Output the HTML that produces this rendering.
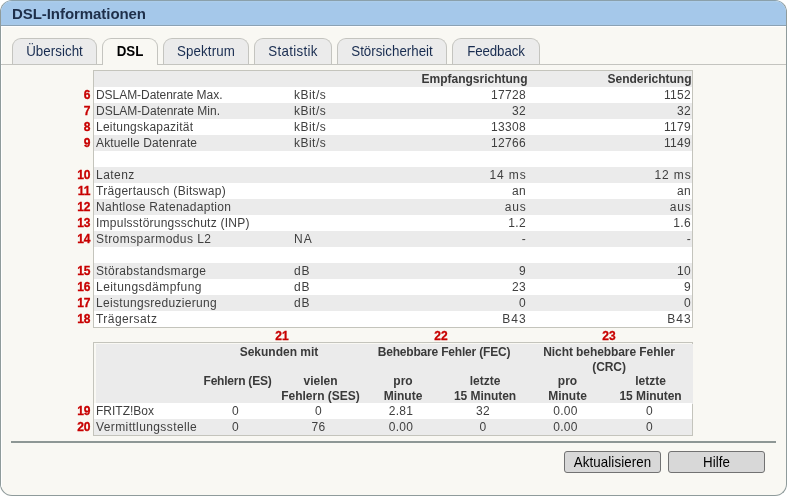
<!DOCTYPE html>
<html lang="de">
<head>
<meta charset="utf-8">
<title>DSL-Informationen</title>
<style>
html,body{margin:0;padding:0;background:#fff;}
body{width:787px;height:496px;overflow:hidden;font-family:"Liberation Sans",sans-serif;font-size:12px;color:#3f3f3f;position:relative;}
#win{will-change:transform;position:absolute;left:0;top:0;width:785px;height:494px;border:1px solid #8f9b9b;border-top-color:#8aa0ab;border-radius:12px;background:#f9f8f3;overflow:hidden;}
#head{position:absolute;left:0;top:0;width:785px;height:24px;background:linear-gradient(#adcdea 0,#a5c8ea 2px,#a5c8ea 22px,#a9cae8 24px);border-bottom:1px solid #8ba2b4;}
#head span{position:absolute;left:11px;top:4px;font-size:15px;font-weight:bold;color:#1e2f4a;line-height:18px;letter-spacing:-0.06px;}
#hl{position:absolute;left:0;top:25px;width:785px;height:1px;background:#fff;}
#vl{position:absolute;left:0;top:26px;width:1px;height:460px;background:#fff;}
#tabline{position:absolute;left:0;top:63px;width:785px;height:1px;background:#c4c4bf;}
.tab{position:absolute;top:37px;height:26px;box-sizing:border-box;border:1px solid #c4c4bf;border-bottom:none;border-radius:9px 9px 0 0;background:#ebebeb;color:#182c50;font-size:13.33px;line-height:25px;text-align:center;white-space:nowrap;}
.tab.act{background:#f9f8f3;color:#000;font-weight:bold;height:27px;z-index:2;}
table{border-collapse:separate;border-spacing:0;position:absolute;table-layout:fixed;box-sizing:border-box;}
#t1{left:92px;top:69px;width:600px;border:1px solid #c4c4bc;}
#t1 td,#t1 th{height:16px;line-height:16px;padding:0 2px;font-size:12px;white-space:nowrap;overflow:visible;}
#t1 th{font-weight:bold;text-align:right;color:#3a3a3a;padding-right:0.5px;}
tr.g{background:#ebebeb;}
tr.w{background:#fff;}
td.r{text-align:right;letter-spacing:0.33px;}
#t1 td.r2{padding-right:1px;}
.num{-webkit-text-stroke:0.3px #c80000;position:absolute;width:30px;text-align:right;color:#c80000;font-weight:bold;font-size:12px;line-height:16px;left:59.5px;}
.cn{-webkit-text-stroke:0.3px #c80000;position:absolute;color:#c80000;font-weight:bold;font-size:12px;line-height:14px;top:328px;width:40px;text-align:center;}
#t2{left:92px;top:341px;width:600px;border:1px solid #c4c4bc;}
#t2 td,#t2 th{line-height:16px;height:16px;padding:0 2px;font-size:12px;text-align:center;}
#t2 td{letter-spacing:0.33px;}
#t2 th{font-weight:bold;color:#3a3a3a;vertical-align:top;line-height:15px;height:auto;padding:0;position:relative;top:1px;left:2px;}
#t2 th.e{left:1px;}
#t2 tr.h1 th{height:29px;padding-top:1px;}
#t2 tr.h2 th{height:30px;}
#t2 .crc{margin-bottom:-1px;}
#t2 .dn{position:relative;top:1px;left:2px;}
#t2 th.e{left:1px;}
#t2 td.l{text-align:left;}
#hr{position:absolute;left:10px;top:440px;width:765px;height:2px;background:#8e9795;}
.btn{position:absolute;top:450px;height:22px;width:97px;box-sizing:border-box;border:1px solid #727272;border-radius:3px;background:#d8d8d8;color:#000;font-size:13.33px;line-height:20px;text-align:center;letter-spacing:0.1px;}
.sy{display:inline-block;transform:scaleY(1.08);transform-origin:50% 78%;}
.btn .sy{position:relative;top:1px;}
</style>
</head>
<body>
<div id="win">
<div id="head"><span>DSL-Informationen</span></div><div id="hl"></div><div id="vl"></div>

<div class="tab" style="left:11px;width:85px;letter-spacing:0.05px"><span class="sy">Übersicht</span></div>
<div class="tab act" style="left:101px;width:56px;"><span class="sy">DSL</span></div>
<div class="tab" style="left:162px;width:86px;letter-spacing:0.1px"><span class="sy">Spektrum</span></div>
<div class="tab" style="left:253px;width:78px;letter-spacing:0.3px"><span class="sy">Statistik</span></div>
<div class="tab" style="left:336px;width:110px;"><span class="sy">Störsicherheit</span></div>
<div class="tab" style="left:451px;width:88px;letter-spacing:-0.1px"><span class="sy">Feedback</span></div>
<div id="tabline"></div>

<table id="t1">
<colgroup><col style="width:198px"><col style="width:60px"><col style="width:176px"><col style="width:164px"></colgroup>
<tr class="g"><th></th><th></th><th>Empfangsrichtung</th><th>Senderichtung</th></tr>
<tr class="w"><td style="letter-spacing:-0.047px">DSLAM-Datenrate Max.</td><td style="letter-spacing:0.48px">kBit/s</td><td class="r">17728</td><td class="r r2">1152</td></tr>
<tr class="g"><td>DSLAM-Datenrate Min.</td><td style="letter-spacing:0.48px">kBit/s</td><td class="r">32</td><td class="r r2">32</td></tr>
<tr class="w"><td style="letter-spacing:0.225px">Leitungskapazität</td><td style="letter-spacing:0.48px">kBit/s</td><td class="r">13308</td><td class="r r2">1179</td></tr>
<tr class="g"><td style="letter-spacing:0.135px">Aktuelle Datenrate</td><td style="letter-spacing:0.48px">kBit/s</td><td class="r">12766</td><td class="r r2">1149</td></tr>
<tr class="w"><td>&nbsp;</td><td></td><td class="r"></td><td class="r r2"></td></tr>
<tr class="g"><td style="letter-spacing:0.460px">Latenz</td><td></td><td class="r" style="letter-spacing:0.9px;padding-right:1.43px">14 ms</td><td class="r r2" style="letter-spacing:0.9px;padding-right:0.43px">12 ms</td></tr>
<tr class="w"><td style="letter-spacing:0.290px">Trägertausch (Bitswap)</td><td></td><td class="r">an</td><td class="r r2">an</td></tr>
<tr class="g"><td style="letter-spacing:0.295px">Nahtlose Ratenadaption</td><td></td><td class="r" style="letter-spacing:0.8px;padding-right:1.53px">aus</td><td class="r r2" style="letter-spacing:0.8px;padding-right:0.53px">aus</td></tr>
<tr class="w"><td style="letter-spacing:0.244px">Impulsstörungsschutz (INP)</td><td></td><td class="r">1.2</td><td class="r r2">1.6</td></tr>
<tr class="g"><td style="letter-spacing:0.430px">Stromsparmodus L2</td><td style="letter-spacing:1px">NA</td><td class="r">-</td><td class="r r2">-</td></tr>
<tr class="w"><td>&nbsp;</td><td></td><td class="r"></td><td class="r r2"></td></tr>
<tr class="g"><td style="letter-spacing:0.325px">Störabstandsmarge</td><td style="letter-spacing:0.9px">dB</td><td class="r">9</td><td class="r r2">10</td></tr>
<tr class="w"><td style="letter-spacing:0.453px">Leitungsdämpfung</td><td style="letter-spacing:0.9px">dB</td><td class="r">23</td><td class="r r2">9</td></tr>
<tr class="g"><td style="letter-spacing:0.316px">Leistungsreduzierung</td><td style="letter-spacing:0.9px">dB</td><td class="r">0</td><td class="r r2">0</td></tr>
<tr class="w"><td style="letter-spacing:0.444px">Trägersatz</td><td></td><td class="r" style="letter-spacing:1.1px;padding-right:1.23px">B43</td><td class="r r2" style="letter-spacing:1.1px;padding-right:0.23px">B43</td></tr>
</table>

<div class="num" style="top:86px">6</div>
<div class="num" style="top:102px">7</div>
<div class="num" style="top:118px">8</div>
<div class="num" style="top:134px">9</div>
<div class="num" style="top:166px">10</div>
<div class="num" style="top:182px">11</div>
<div class="num" style="top:198px">12</div>
<div class="num" style="top:214px">13</div>
<div class="num" style="top:230px">14</div>
<div class="num" style="top:262px">15</div>
<div class="num" style="top:278px">16</div>
<div class="num" style="top:294px">17</div>
<div class="num" style="top:310px">18</div>

<div class="cn" style="left:261px">21</div>
<div class="cn" style="left:420px">22</div>
<div class="cn" style="left:588px">23</div>

<table id="t2">
<colgroup><col style="width:100px"><col style="width:83px"><col style="width:83px"><col style="width:82px"><col style="width:82px"><col style="width:83px"><col style="width:85px"></colgroup>
<tr class="g h1"><th></th><th colspan="2">Sekunden mit</th><th colspan="2" style="letter-spacing:-0.19px">Behebbare Fehler (FEC)</th><th colspan="2" class="e"><div class="crc" style="letter-spacing:-0.08px">Nicht behebbare Fehler<br>(CRC)</div></th></tr>
<tr class="g h2"><th></th><th style="letter-spacing:-0.23px">Fehlern (ES)</th><th>vielen<br>Fehlern (SES)</th><th>pro<br>Minute</th><th>letzte<br><span style="letter-spacing:-0.05px">15&nbsp;Minuten</span></th><th>pro<br>Minute</th><th class="e">letzte<br><span style="letter-spacing:-0.05px">15&nbsp;Minuten</span></th></tr>
<tr class="w"><td class="l" style="letter-spacing:0">FRITZ!Box</td><td>0</td><td>0</td><td>2.81</td><td>32</td><td>0.00</td><td>0</td></tr>
<tr class="g"><td class="l" style="letter-spacing:0.394px">Vermittlungsstelle</td><td>0</td><td>76</td><td>0.00</td><td>0</td><td>0.00</td><td>0</td></tr>
</table>

<div class="num" style="top:402px">19</div>
<div class="num" style="top:418px">20</div>

<div id="hr"></div>
<div class="btn" style="left:563px"><span class="sy">Aktualisieren</span></div>
<div class="btn" style="left:667px"><span class="sy">Hilfe</span></div>
</div>
</body>
</html>
